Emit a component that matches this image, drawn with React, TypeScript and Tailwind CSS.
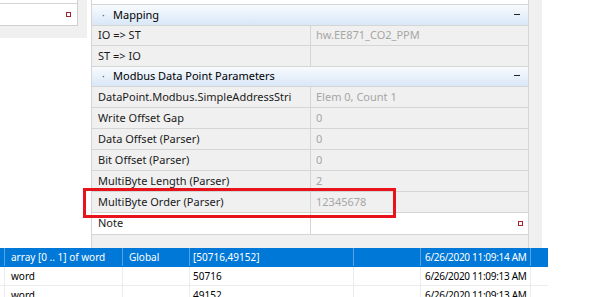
import React from "react";

type Prop = { name: string; value?: string; h?: string };

function Category({ label, h = "h-[21px]" }: { label: string; h?: string }) {
  return (
    <div
      className={`${h} flex items-center border-b border-[#d5d5d5] bg-gradient-to-b from-[#f8fbfe] to-[#d9e7f7] text-black`}
    >
      <span className="w-[21px] pl-[10px] text-[10px] text-[#555]">·</span>
      <span className="flex-1">{label}</span>
      <span className="mr-[8px] mb-[2px] h-[1px] w-[6px] bg-[#222]" />
    </div>
  );
}

function Row({ name, value, h = "h-[21px]" }: Prop) {
  return (
    <div className={`${h} flex border-b border-[#d5d5d5]`}>
      <div className="flex w-[219px] items-center overflow-hidden whitespace-nowrap border-r border-[#d5d5d5] pl-[6px] text-[#1a1a1a]">
        {name}
      </div>
      <div className="flex flex-1 items-center pl-[5px] text-[#a6a6a6]">{value}</div>
    </div>
  );
}

const tableRows = [
  { type: "array [0 .. 1] of word", scope: "Global", value: "[50716,49152]", time: "6/26/2020 11:09:14 AM", sel: true },
  { type: "word", scope: "", value: "50716", time: "6/26/2020 11:09:13 AM", sel: false },
  { type: "word", scope: "", value: "49152", time: "6/26/2020 11:09:13 AM", sel: false },
];

export default function App() {
  return (
    <div className="relative h-[297px] w-[614px] overflow-hidden bg-white font-['Noto_Sans',sans-serif] text-[11px]">
      {/* top area */}
      <div className="flex h-[248px]">
        {/* left panel */}
        <div className="w-[87px]">
          <div className="h-[38px] bg-[#f0f0f0]">
            <div className="h-[26px] w-[78px] border-r border-b border-[#d0d0d0] bg-white">
              <div className="h-[4px] border-b border-[#d5d5d5]" />
              <div className="flex h-[21px] items-center justify-end pr-[6px]">
                <span className="h-[5px] w-[5px] border border-[#a4262c] bg-white" />
              </div>
            </div>
          </div>
        </div>
        <div className="w-[4px]" />
        {/* property grid */}
        <div className="flex w-[451px] bg-[#f0f0f0]">
          <div className="w-[438px] border-l border-r border-[#d5d5d5]">
            <div className="h-[5px] border-b border-[#d5d5d5] bg-white" />
            <Category label="Mapping" />
            <Row name="IO => ST" value="hw.EE871_CO2_PPM" h="h-[20px]" />
            <Row name="ST => IO" />
            <Category label="Modbus Data Point Parameters" h="h-[20px]" />
            <Row name="DataPoint.Modbus.SimpleAddressStri" value="Elem 0, Count 1" />
            <Row name="Write Offset Gap" value="0" />
            <Row name="Data Offset (Parser)" value="0" />
            <Row name="Bit Offset (Parser)" value="0" />
            <Row name="MultiByte Length (Parser)" value="2" />
            <Row name="MultiByte Order (Parser)" value="12345678" />
            <div className="flex h-[22px] border-b border-[#d5d5d5] bg-white">
              <div className="flex w-[219px] items-center border-r border-[#d5d5d5] pl-[6px] text-[#1a1a1a]">
                Note
              </div>
              <div className="flex flex-1 items-center justify-end pr-[5px]">
                <span className="h-[5px] w-[5px] border border-[#a4262c] bg-white" />
              </div>
            </div>
          </div>
        </div>
      </div>

      {/* bottom table */}
      <div className="w-[548px] text-[10px]">
        {tableRows.map((r, i) => (
          <div
            key={i}
            className={`flex h-[19px] whitespace-nowrap border-b ${
              r.sel ? "border-[#0078d7] bg-[#0078d7] text-white" : "border-[#ececec] text-black"
            }`}
          >
            <div className={`w-[5px] border-r ${r.sel ? "border-[#5aa2e2]" : "border-[#ececec]"}`} />
            <div className={`flex w-[118px] items-center border-r pl-[6px] ${r.sel ? "border-[#5aa2e2]" : "border-[#ececec]"}`}>
              {r.type}
            </div>
            <div className={`flex w-[67px] items-center border-r pl-[6px] ${r.sel ? "border-[#5aa2e2]" : "border-[#ececec]"}`}>
              {r.scope}
            </div>
            <div className={`flex w-[164px] items-center border-r pl-[3px] ${r.sel ? "border-[#5aa2e2]" : "border-[#ececec]"}`}>
              {r.value}
            </div>
            <div className={`w-[67px] border-r ${r.sel ? "border-[#5aa2e2]" : "border-[#ececec]"}`} />
            <div className={`flex w-[110px] items-center overflow-hidden border-r pl-[4px] tracking-[-0.3px] ${r.sel ? "border-[#5aa2e2]" : "border-[#ececec]"}`}>
              {r.time}
            </div>
          </div>
        ))}
      </div>

      {/* red highlight */}
      <div className="pointer-events-none absolute left-[83px] top-[188px] h-[30px] w-[313px] border-[3px] border-[#e8141b]" />
    </div>
  );
}
